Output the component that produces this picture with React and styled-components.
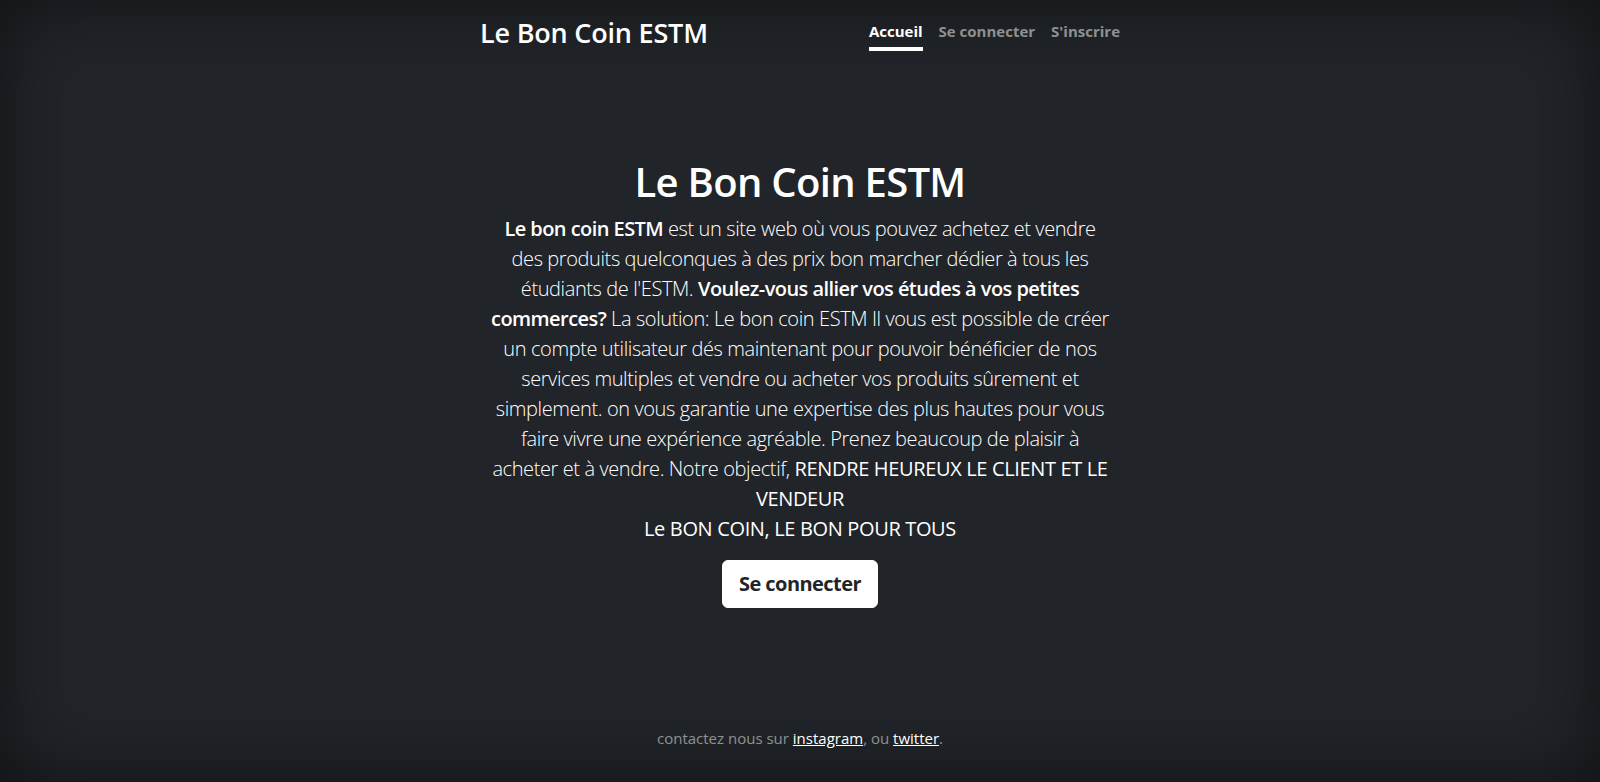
import React from "react";
import styled, { createGlobalStyle } from "styled-components";

const Global = createGlobalStyle`
  html, body, #root { height: 100%; }
  body {
    margin: 0;
    background: #212529;
    color: #fff;
    font-family: "Open Sans", "Noto Sans", sans-serif;
    font-size: 16px;
    line-height: 1.5;
    text-align: center;
    box-shadow: inset 0 0 5rem rgba(0,0,0,.5);
  }
  * { box-sizing: border-box; }
`;

const Cover = styled.div`
  display: flex;
  flex-direction: column;
  width: 100%;
  max-width: 672px;
  min-height: 100%;
  margin: 0 auto;
  padding: 16px;
`;

const Header = styled.header`
  display: flex;
  justify-content: space-between;
  align-items: center;
  margin-bottom: auto;
`;

const Brand = styled.h3`
  margin: 0;
  font-size: 27px;
  font-weight: 600;
  letter-spacing: -0.2px;
  line-height: 1.2;
`;

const Nav = styled.nav`
  display: flex;
  gap: 16px;
`;

const NavLink = styled.a`
  padding: 4px 0;
  font-weight: 700;
  font-size: 15px;
  color: ${(p) => (p.$active ? "#fff" : "rgba(255,255,255,.5)")};
  border-bottom: 4px solid ${(p) => (p.$active ? "#fff" : "transparent")};
  text-decoration: none;
`;

const Main = styled.main`
  padding: 0 16px;
`;

const Title = styled.h1`
  margin: 0 0 8px;
  font-size: 40px;
  font-weight: 600;
  letter-spacing: -0.7px;
  line-height: 1.2;
`;

const Lead = styled.p`
  margin: 0 -20px 16px;
  font-size: 20px;
  line-height: 30px;
  font-weight: 300;
  letter-spacing: -0.4px;
  white-space: nowrap;
`;

const Strong = styled.b`
  font-weight: ${(p) => p.$w || 600};
  letter-spacing: ${(p) => (p.$w ? "-0.35px" : "-0.55px")};
`;

const ButtonRow = styled.p`
  margin: 0 0 10px;
  line-height: 30px;
`;

const Button = styled.a`
  display: inline-block;
  padding: 8px 16px;
  font-size: 20px;
  font-weight: 700;
  line-height: 1.5;
  letter-spacing: -0.55px;
  color: #212529;
  background: #fff;
  border: 1px solid #fff;
  border-radius: 6px;
  text-decoration: none;
`;

const Footer = styled.footer`
  margin-top: auto;
  color: rgba(255,255,255,.5);
  p { margin: 0 0 16px; font-size: 15px; line-height: 24px; }
`;

const FootLink = styled.a`
  color: #fff;
  text-decoration: underline;
`;

export default function App() {
  return (
    <>
      <Global />
      <Cover>
        <Header>
          <Brand>Le Bon Coin ESTM</Brand>
          <Nav>
            <NavLink $active href="#">Accueil</NavLink>
            <NavLink href="#">Se connecter</NavLink>
            <NavLink href="#">S'inscrire</NavLink>
          </Nav>
        </Header>
        <Main>
          <Title>Le Bon Coin ESTM</Title>
          <Lead>
            <Strong>Le bon coin ESTM</Strong> est un site web où vous pouvez achetez et vendre<br />
            des produits quelconques à des prix bon marcher dédier à tous les<br />
            étudiants de l'ESTM. <Strong>Voulez-vous allier vos études à vos petites<br />
            commerces?</Strong> La solution: Le bon coin ESTM Il vous est possible de créer<br />
            un compte utilisateur dés maintenant pour pouvoir bénéficier de nos<br />
            services multiples et vendre ou acheter vos produits sûrement et<br />
            simplement. on vous garantie une expertise des plus hautes pour vous<br />
            faire vivre une expérience agréable. Prenez beaucoup de plaisir à<br />
            acheter et à vendre. Notre objectif, <Strong $w={400}>RENDRE HEUREUX LE CLIENT ET LE<br />
            VENDEUR</Strong>
            <br />
            <Strong $w={400}>Le BON COIN, LE BON POUR TOUS</Strong>
          </Lead>
          <ButtonRow>
            <Button href="#">Se connecter</Button>
          </ButtonRow>
        </Main>
        <Footer>
          <p>
            contactez nous sur <FootLink href="#">instagram</FootLink>, ou <FootLink href="#">twitter</FootLink>.
          </p>
        </Footer>
      </Cover>
    </>
  );
}
